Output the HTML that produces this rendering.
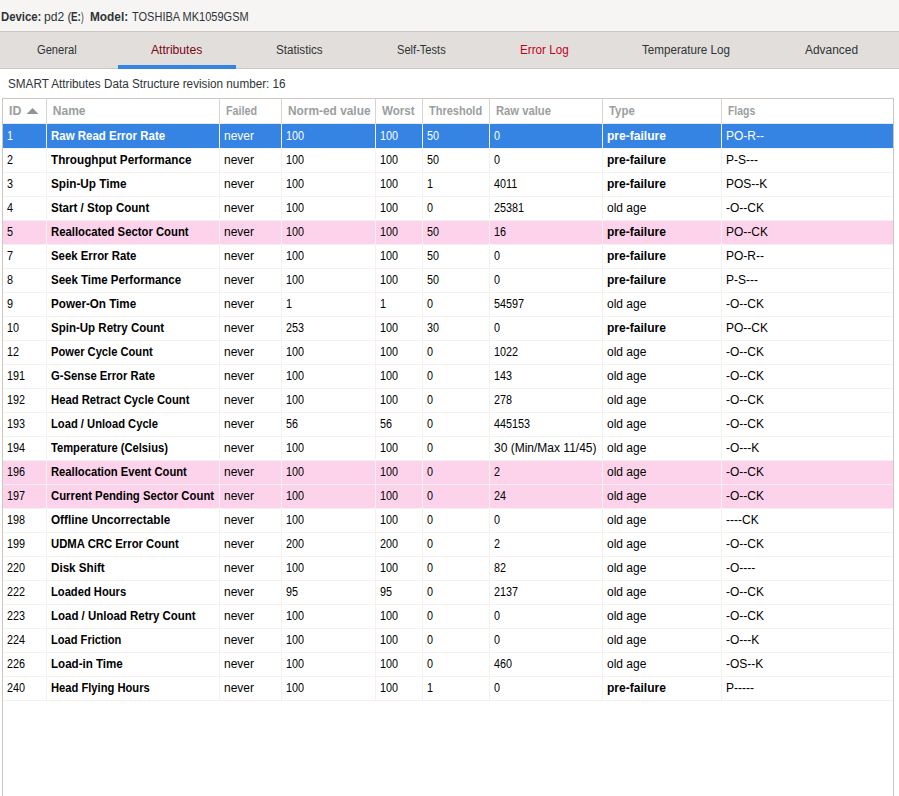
<!DOCTYPE html><html><head><meta charset="utf-8"><style>
*{margin:0;padding:0;box-sizing:border-box}
html,body{width:899px;height:796px;overflow:hidden;background:#fff;font-family:"Liberation Sans",sans-serif;font-size:12px;color:#000}
.a{position:absolute;white-space:nowrap}
#top{position:absolute;left:0;top:0;width:899px;height:31px;background:#f6f5f4}
#tabs{position:absolute;left:0;top:31px;width:899px;height:38px;background:#e1dedb;border-top:1px solid #cdc7c2;border-bottom:1px solid #cdc7c2}
#ul{position:absolute;left:118px;top:65px;width:118px;height:4px;background:#3584e4}
#frame{position:absolute;left:2px;top:98px;width:892px;height:720px;border:1px solid #cdc7c2;background:#fff}
.vs{position:absolute;width:1px}
.hl{position:absolute;left:3px;width:890px;height:1px;background:#f3f2f1}
.row{position:absolute;left:3px;width:890px;height:23px}
</style></head><body>
<div id="top"></div>
<div class="a" style="left:0.86px;top:10.0px;line-height:14px;font-weight:bold;color:#2e3436;transform:scaleX(0.9439);transform-origin:0 0;">Device:</div>
<div class="a" style="left:43.99px;top:10.0px;line-height:14px;color:#2e3436;transform:scaleX(1.0077);transform-origin:0 0;">pd2 (</div>
<div class="a" style="left:70.98px;top:10.0px;line-height:14px;font-weight:bold;color:#2e3436;transform:scaleX(0.82);transform-origin:0 0;">E:</div>
<div class="a" style="left:80.5px;top:10.0px;line-height:14px;color:#2e3436;transform:scaleX(0.675);transform-origin:0 0;">)</div>
<div class="a" style="left:89.51px;top:10.0px;line-height:14px;font-weight:bold;color:#2e3436;transform:scaleX(0.9865);transform-origin:0 0;">Model:</div>
<div class="a" style="left:131.5px;top:10.0px;line-height:14px;color:#2e3436;transform:scaleX(0.9173);transform-origin:0 0;">TOSHIBA MK1059GSM</div>
<div id="tabs"></div>
<div class="a" style="left:37.3px;top:43px;line-height:14px;color:#2e3436;transform:scaleX(0.9286);transform-origin:0 0;">General</div>
<div class="a" style="left:151.0px;top:43px;line-height:14px;color:#7d0414;transform:scaleX(1.0118);transform-origin:0 0;">Attributes</div>
<div class="a" style="left:276.33px;top:43px;line-height:14px;color:#2e3436;transform:scaleX(0.9723);transform-origin:0 0;">Statistics</div>
<div class="a" style="left:396.88px;top:43px;line-height:14px;color:#2e3436;transform:scaleX(0.925);transform-origin:0 0;">Self-Tests</div>
<div class="a" style="left:519.73px;top:43px;line-height:14px;color:#c4001c;transform:scaleX(0.9729);transform-origin:0 0;">Error Log</div>
<div class="a" style="left:642.2px;top:43px;line-height:14px;color:#2e3436;transform:scaleX(0.97);transform-origin:0 0;">Temperature Log</div>
<div class="a" style="left:805.0px;top:43px;line-height:14px;color:#2e3436;transform:scaleX(0.9943);transform-origin:0 0;">Advanced</div>
<div id="ul"></div>
<div class="a" style="left:8.02px;top:77px;line-height:14px;color:#2e3436;transform:scaleX(0.9763);transform-origin:0 0;">SMART Attributes Data Structure revision number: 16</div>
<div id="frame"></div>
<div class="hl" style="top:123px;background:#ece9e6"></div>
<div class="vs" style="left:46px;top:99px;height:25px;background:#d9d5d1"></div>
<div class="vs" style="left:219px;top:99px;height:25px;background:#d9d5d1"></div>
<div class="vs" style="left:281px;top:99px;height:25px;background:#d9d5d1"></div>
<div class="vs" style="left:375px;top:99px;height:25px;background:#d9d5d1"></div>
<div class="vs" style="left:422px;top:99px;height:25px;background:#d9d5d1"></div>
<div class="vs" style="left:489px;top:99px;height:25px;background:#d9d5d1"></div>
<div class="vs" style="left:602px;top:99px;height:25px;background:#d9d5d1"></div>
<div class="vs" style="left:721px;top:99px;height:25px;background:#d9d5d1"></div>
<div class="a" style="left:8.77px;top:99px;line-height:24px;font-weight:bold;color:#9b9e9e;transform:scaleX(1.0273);transform-origin:0 0;">ID</div>
<div class="a" style="left:52.8px;top:99px;line-height:24px;font-weight:bold;color:#9b9e9e;">Name</div>
<div class="a" style="left:226.0px;top:99px;line-height:24px;font-weight:bold;color:#9b9e9e;transform:scaleX(0.897);transform-origin:0 0;">Failed</div>
<div class="a" style="left:287.51px;top:99px;line-height:24px;font-weight:bold;color:#9b9e9e;transform:scaleX(0.9902);transform-origin:0 0;">Norm-ed value</div>
<div class="a" style="left:382.2px;top:99px;line-height:24px;font-weight:bold;color:#9b9e9e;transform:scaleX(0.9676);transform-origin:0 0;">Worst</div>
<div class="a" style="left:429.4px;top:99px;line-height:24px;font-weight:bold;color:#9b9e9e;transform:scaleX(0.9155);transform-origin:0 0;">Threshold</div>
<div class="a" style="left:496.16px;top:99px;line-height:24px;font-weight:bold;color:#9b9e9e;transform:scaleX(0.9362);transform-origin:0 0;">Raw value</div>
<div class="a" style="left:609.1px;top:99px;line-height:24px;font-weight:bold;color:#9b9e9e;transform:scaleX(0.9481);transform-origin:0 0;">Type</div>
<div class="a" style="left:728.03px;top:99px;line-height:24px;font-weight:bold;color:#9b9e9e;transform:scaleX(0.8667);transform-origin:0 0;">Flags</div>
<svg class="a" style="left:25.5px;top:108px" width="13" height="6"><path d="M0.6 6 L6.5 0.1 L12.4 6 Z" fill="#8e9394"/></svg>
<div class="row" style="top:124px;height:24px;background:#3584e4"></div>
<div class="a" style="left:7px;top:124px;line-height:24px;color:#fff;transform:scaleX(0.9);transform-origin:0 0;">1</div>
<div class="a" style="left:51.24px;top:124px;line-height:24px;font-weight:bold;color:#fff;transform:scaleX(0.9559);transform-origin:0 0;">Raw Read Error Rate</div>
<div class="a" style="left:224px;top:124px;line-height:24px;color:#fff;">never</div>
<div class="a" style="left:286px;top:124px;line-height:24px;color:#fff;transform:scaleX(0.9);transform-origin:0 0;">100</div>
<div class="a" style="left:380px;top:124px;line-height:24px;color:#fff;transform:scaleX(0.9);transform-origin:0 0;">100</div>
<div class="a" style="left:427px;top:124px;line-height:24px;color:#fff;transform:scaleX(0.9);transform-origin:0 0;">50</div>
<div class="a" style="left:494px;top:124px;line-height:24px;color:#fff;transform:scaleX(0.9);transform-origin:0 0;">0</div>
<div class="a" style="left:606.6px;top:124px;line-height:24px;font-weight:bold;color:#fff;transform:scaleX(1.0034);transform-origin:0 0;">pre-failure</div>
<div class="a" style="left:726px;top:124px;line-height:24px;color:#fff;">PO-R--</div>
<div class="hl" style="top:148px"></div>
<div class="a" style="left:7px;top:148px;line-height:24px;color:#000;transform:scaleX(0.9);transform-origin:0 0;">2</div>
<div class="a" style="left:51.4px;top:148px;line-height:24px;font-weight:bold;color:#000;transform:scaleX(0.975);transform-origin:0 0;">Throughput Performance</div>
<div class="a" style="left:224px;top:148px;line-height:24px;color:#000;">never</div>
<div class="a" style="left:286px;top:148px;line-height:24px;color:#000;transform:scaleX(0.9);transform-origin:0 0;">100</div>
<div class="a" style="left:380px;top:148px;line-height:24px;color:#000;transform:scaleX(0.9);transform-origin:0 0;">100</div>
<div class="a" style="left:427px;top:148px;line-height:24px;color:#000;transform:scaleX(0.9);transform-origin:0 0;">50</div>
<div class="a" style="left:494px;top:148px;line-height:24px;color:#000;transform:scaleX(0.9);transform-origin:0 0;">0</div>
<div class="a" style="left:606.6px;top:148px;line-height:24px;font-weight:bold;color:#000;transform:scaleX(1.0034);transform-origin:0 0;">pre-failure</div>
<div class="a" style="left:726px;top:148px;line-height:24px;color:#000;">P-S---</div>
<div class="hl" style="top:172px"></div>
<div class="a" style="left:7px;top:172px;line-height:24px;color:#000;transform:scaleX(0.9);transform-origin:0 0;">3</div>
<div class="a" style="left:51.4px;top:172px;line-height:24px;font-weight:bold;color:#000;transform:scaleX(0.9779);transform-origin:0 0;">Spin-Up Time</div>
<div class="a" style="left:224px;top:172px;line-height:24px;color:#000;">never</div>
<div class="a" style="left:286px;top:172px;line-height:24px;color:#000;transform:scaleX(0.9);transform-origin:0 0;">100</div>
<div class="a" style="left:380px;top:172px;line-height:24px;color:#000;transform:scaleX(0.9);transform-origin:0 0;">100</div>
<div class="a" style="left:427px;top:172px;line-height:24px;color:#000;transform:scaleX(0.9);transform-origin:0 0;">1</div>
<div class="a" style="left:494px;top:172px;line-height:24px;color:#000;transform:scaleX(0.9);transform-origin:0 0;">4011</div>
<div class="a" style="left:606.6px;top:172px;line-height:24px;font-weight:bold;color:#000;transform:scaleX(1.0034);transform-origin:0 0;">pre-failure</div>
<div class="a" style="left:726px;top:172px;line-height:24px;color:#000;">POS--K</div>
<div class="hl" style="top:196px"></div>
<div class="a" style="left:7px;top:196px;line-height:24px;color:#000;transform:scaleX(0.9);transform-origin:0 0;">4</div>
<div class="a" style="left:51.4px;top:196px;line-height:24px;font-weight:bold;color:#000;transform:scaleX(0.9637);transform-origin:0 0;">Start / Stop Count</div>
<div class="a" style="left:224px;top:196px;line-height:24px;color:#000;">never</div>
<div class="a" style="left:286px;top:196px;line-height:24px;color:#000;transform:scaleX(0.9);transform-origin:0 0;">100</div>
<div class="a" style="left:380px;top:196px;line-height:24px;color:#000;transform:scaleX(0.9);transform-origin:0 0;">100</div>
<div class="a" style="left:427px;top:196px;line-height:24px;color:#000;transform:scaleX(0.9);transform-origin:0 0;">0</div>
<div class="a" style="left:494px;top:196px;line-height:24px;color:#000;transform:scaleX(0.9);transform-origin:0 0;">25381</div>
<div class="a" style="left:607px;top:196px;line-height:24px;color:#000;">old age</div>
<div class="a" style="left:726px;top:196px;line-height:24px;color:#000;">-O--CK</div>
<div class="hl" style="top:220px"></div>
<div class="row" style="top:221px;background:#fdd3eb"></div>
<div class="a" style="left:7px;top:220px;line-height:24px;color:#000;transform:scaleX(0.9);transform-origin:0 0;">5</div>
<div class="a" style="left:51.26px;top:220px;line-height:24px;font-weight:bold;color:#000;transform:scaleX(0.9421);transform-origin:0 0;">Reallocated Sector Count</div>
<div class="a" style="left:224px;top:220px;line-height:24px;color:#000;">never</div>
<div class="a" style="left:286px;top:220px;line-height:24px;color:#000;transform:scaleX(0.9);transform-origin:0 0;">100</div>
<div class="a" style="left:380px;top:220px;line-height:24px;color:#000;transform:scaleX(0.9);transform-origin:0 0;">100</div>
<div class="a" style="left:427px;top:220px;line-height:24px;color:#000;transform:scaleX(0.9);transform-origin:0 0;">50</div>
<div class="a" style="left:494px;top:220px;line-height:24px;color:#000;transform:scaleX(0.9);transform-origin:0 0;">16</div>
<div class="a" style="left:606.6px;top:220px;line-height:24px;font-weight:bold;color:#000;transform:scaleX(1.0034);transform-origin:0 0;">pre-failure</div>
<div class="a" style="left:726px;top:220px;line-height:24px;color:#000;">PO--CK</div>
<div class="hl" style="top:244px"></div>
<div class="a" style="left:7px;top:244px;line-height:24px;color:#000;transform:scaleX(0.9);transform-origin:0 0;">7</div>
<div class="a" style="left:51.4px;top:244px;line-height:24px;font-weight:bold;color:#000;transform:scaleX(0.9478);transform-origin:0 0;">Seek Error Rate</div>
<div class="a" style="left:224px;top:244px;line-height:24px;color:#000;">never</div>
<div class="a" style="left:286px;top:244px;line-height:24px;color:#000;transform:scaleX(0.9);transform-origin:0 0;">100</div>
<div class="a" style="left:380px;top:244px;line-height:24px;color:#000;transform:scaleX(0.9);transform-origin:0 0;">100</div>
<div class="a" style="left:427px;top:244px;line-height:24px;color:#000;transform:scaleX(0.9);transform-origin:0 0;">50</div>
<div class="a" style="left:494px;top:244px;line-height:24px;color:#000;transform:scaleX(0.9);transform-origin:0 0;">0</div>
<div class="a" style="left:606.6px;top:244px;line-height:24px;font-weight:bold;color:#000;transform:scaleX(1.0034);transform-origin:0 0;">pre-failure</div>
<div class="a" style="left:726px;top:244px;line-height:24px;color:#000;">PO-R--</div>
<div class="hl" style="top:268px"></div>
<div class="a" style="left:7px;top:268px;line-height:24px;color:#000;transform:scaleX(0.9);transform-origin:0 0;">8</div>
<div class="a" style="left:51.4px;top:268px;line-height:24px;font-weight:bold;color:#000;transform:scaleX(0.9574);transform-origin:0 0;">Seek Time Performance</div>
<div class="a" style="left:224px;top:268px;line-height:24px;color:#000;">never</div>
<div class="a" style="left:286px;top:268px;line-height:24px;color:#000;transform:scaleX(0.9);transform-origin:0 0;">100</div>
<div class="a" style="left:380px;top:268px;line-height:24px;color:#000;transform:scaleX(0.9);transform-origin:0 0;">100</div>
<div class="a" style="left:427px;top:268px;line-height:24px;color:#000;transform:scaleX(0.9);transform-origin:0 0;">50</div>
<div class="a" style="left:494px;top:268px;line-height:24px;color:#000;transform:scaleX(0.9);transform-origin:0 0;">0</div>
<div class="a" style="left:606.6px;top:268px;line-height:24px;font-weight:bold;color:#000;transform:scaleX(1.0034);transform-origin:0 0;">pre-failure</div>
<div class="a" style="left:726px;top:268px;line-height:24px;color:#000;">P-S---</div>
<div class="hl" style="top:292px"></div>
<div class="a" style="left:7px;top:292px;line-height:24px;color:#000;transform:scaleX(0.9);transform-origin:0 0;">9</div>
<div class="a" style="left:51.23px;top:292px;line-height:24px;font-weight:bold;color:#000;transform:scaleX(0.9701);transform-origin:0 0;">Power-On Time</div>
<div class="a" style="left:224px;top:292px;line-height:24px;color:#000;">never</div>
<div class="a" style="left:286px;top:292px;line-height:24px;color:#000;transform:scaleX(0.9);transform-origin:0 0;">1</div>
<div class="a" style="left:380px;top:292px;line-height:24px;color:#000;transform:scaleX(0.9);transform-origin:0 0;">1</div>
<div class="a" style="left:427px;top:292px;line-height:24px;color:#000;transform:scaleX(0.9);transform-origin:0 0;">0</div>
<div class="a" style="left:494px;top:292px;line-height:24px;color:#000;transform:scaleX(0.9);transform-origin:0 0;">54597</div>
<div class="a" style="left:607px;top:292px;line-height:24px;color:#000;">old age</div>
<div class="a" style="left:726px;top:292px;line-height:24px;color:#000;">-O--CK</div>
<div class="hl" style="top:316px"></div>
<div class="a" style="left:7px;top:316px;line-height:24px;color:#000;transform:scaleX(0.9);transform-origin:0 0;">10</div>
<div class="a" style="left:51.4px;top:316px;line-height:24px;font-weight:bold;color:#000;transform:scaleX(0.9593);transform-origin:0 0;">Spin-Up Retry Count</div>
<div class="a" style="left:224px;top:316px;line-height:24px;color:#000;">never</div>
<div class="a" style="left:286px;top:316px;line-height:24px;color:#000;transform:scaleX(0.9);transform-origin:0 0;">253</div>
<div class="a" style="left:380px;top:316px;line-height:24px;color:#000;transform:scaleX(0.9);transform-origin:0 0;">100</div>
<div class="a" style="left:427px;top:316px;line-height:24px;color:#000;transform:scaleX(0.9);transform-origin:0 0;">30</div>
<div class="a" style="left:494px;top:316px;line-height:24px;color:#000;transform:scaleX(0.9);transform-origin:0 0;">0</div>
<div class="a" style="left:606.6px;top:316px;line-height:24px;font-weight:bold;color:#000;transform:scaleX(1.0034);transform-origin:0 0;">pre-failure</div>
<div class="a" style="left:726px;top:316px;line-height:24px;color:#000;">PO--CK</div>
<div class="hl" style="top:340px"></div>
<div class="a" style="left:7px;top:340px;line-height:24px;color:#000;transform:scaleX(0.9);transform-origin:0 0;">12</div>
<div class="a" style="left:51.27px;top:340px;line-height:24px;font-weight:bold;color:#000;transform:scaleX(0.9296);transform-origin:0 0;">Power Cycle Count</div>
<div class="a" style="left:224px;top:340px;line-height:24px;color:#000;">never</div>
<div class="a" style="left:286px;top:340px;line-height:24px;color:#000;transform:scaleX(0.9);transform-origin:0 0;">100</div>
<div class="a" style="left:380px;top:340px;line-height:24px;color:#000;transform:scaleX(0.9);transform-origin:0 0;">100</div>
<div class="a" style="left:427px;top:340px;line-height:24px;color:#000;transform:scaleX(0.9);transform-origin:0 0;">0</div>
<div class="a" style="left:494px;top:340px;line-height:24px;color:#000;transform:scaleX(0.9);transform-origin:0 0;">1022</div>
<div class="a" style="left:607px;top:340px;line-height:24px;color:#000;">old age</div>
<div class="a" style="left:726px;top:340px;line-height:24px;color:#000;">-O--CK</div>
<div class="hl" style="top:364px"></div>
<div class="a" style="left:7px;top:364px;line-height:24px;color:#000;transform:scaleX(0.9);transform-origin:0 0;">191</div>
<div class="a" style="left:51.4px;top:364px;line-height:24px;font-weight:bold;color:#000;transform:scaleX(0.9387);transform-origin:0 0;">G-Sense Error Rate</div>
<div class="a" style="left:224px;top:364px;line-height:24px;color:#000;">never</div>
<div class="a" style="left:286px;top:364px;line-height:24px;color:#000;transform:scaleX(0.9);transform-origin:0 0;">100</div>
<div class="a" style="left:380px;top:364px;line-height:24px;color:#000;transform:scaleX(0.9);transform-origin:0 0;">100</div>
<div class="a" style="left:427px;top:364px;line-height:24px;color:#000;transform:scaleX(0.9);transform-origin:0 0;">0</div>
<div class="a" style="left:494px;top:364px;line-height:24px;color:#000;transform:scaleX(0.9);transform-origin:0 0;">143</div>
<div class="a" style="left:607px;top:364px;line-height:24px;color:#000;">old age</div>
<div class="a" style="left:726px;top:364px;line-height:24px;color:#000;">-O--CK</div>
<div class="hl" style="top:388px"></div>
<div class="a" style="left:7px;top:388px;line-height:24px;color:#000;transform:scaleX(0.9);transform-origin:0 0;">192</div>
<div class="a" style="left:51.26px;top:388px;line-height:24px;font-weight:bold;color:#000;transform:scaleX(0.9397);transform-origin:0 0;">Head Retract Cycle Count</div>
<div class="a" style="left:224px;top:388px;line-height:24px;color:#000;">never</div>
<div class="a" style="left:286px;top:388px;line-height:24px;color:#000;transform:scaleX(0.9);transform-origin:0 0;">100</div>
<div class="a" style="left:380px;top:388px;line-height:24px;color:#000;transform:scaleX(0.9);transform-origin:0 0;">100</div>
<div class="a" style="left:427px;top:388px;line-height:24px;color:#000;transform:scaleX(0.9);transform-origin:0 0;">0</div>
<div class="a" style="left:494px;top:388px;line-height:24px;color:#000;transform:scaleX(0.9);transform-origin:0 0;">278</div>
<div class="a" style="left:607px;top:388px;line-height:24px;color:#000;">old age</div>
<div class="a" style="left:726px;top:388px;line-height:24px;color:#000;">-O--CK</div>
<div class="hl" style="top:412px"></div>
<div class="a" style="left:7px;top:412px;line-height:24px;color:#000;transform:scaleX(0.9);transform-origin:0 0;">193</div>
<div class="a" style="left:51.27px;top:412px;line-height:24px;font-weight:bold;color:#000;transform:scaleX(0.9325);transform-origin:0 0;">Load / Unload Cycle</div>
<div class="a" style="left:224px;top:412px;line-height:24px;color:#000;">never</div>
<div class="a" style="left:286px;top:412px;line-height:24px;color:#000;transform:scaleX(0.9);transform-origin:0 0;">56</div>
<div class="a" style="left:380px;top:412px;line-height:24px;color:#000;transform:scaleX(0.9);transform-origin:0 0;">56</div>
<div class="a" style="left:427px;top:412px;line-height:24px;color:#000;transform:scaleX(0.9);transform-origin:0 0;">0</div>
<div class="a" style="left:494px;top:412px;line-height:24px;color:#000;transform:scaleX(0.9);transform-origin:0 0;">445153</div>
<div class="a" style="left:607px;top:412px;line-height:24px;color:#000;">old age</div>
<div class="a" style="left:726px;top:412px;line-height:24px;color:#000;">-O--CK</div>
<div class="hl" style="top:436px"></div>
<div class="a" style="left:7px;top:436px;line-height:24px;color:#000;transform:scaleX(0.9);transform-origin:0 0;">194</div>
<div class="a" style="left:51.4px;top:436px;line-height:24px;font-weight:bold;color:#000;transform:scaleX(0.9288);transform-origin:0 0;">Temperature (Celsius)</div>
<div class="a" style="left:224px;top:436px;line-height:24px;color:#000;">never</div>
<div class="a" style="left:286px;top:436px;line-height:24px;color:#000;transform:scaleX(0.9);transform-origin:0 0;">100</div>
<div class="a" style="left:380px;top:436px;line-height:24px;color:#000;transform:scaleX(0.9);transform-origin:0 0;">100</div>
<div class="a" style="left:427px;top:436px;line-height:24px;color:#000;transform:scaleX(0.9);transform-origin:0 0;">0</div>
<div class="a" style="left:494px;top:436px;line-height:24px;color:#000;">30 (Min/Max 11/45)</div>
<div class="a" style="left:607px;top:436px;line-height:24px;color:#000;">old age</div>
<div class="a" style="left:726px;top:436px;line-height:24px;color:#000;">-O---K</div>
<div class="hl" style="top:460px"></div>
<div class="row" style="top:461px;background:#fdd3eb"></div>
<div class="a" style="left:7px;top:460px;line-height:24px;color:#000;transform:scaleX(0.9);transform-origin:0 0;">196</div>
<div class="a" style="left:51.27px;top:460px;line-height:24px;font-weight:bold;color:#000;transform:scaleX(0.9347);transform-origin:0 0;">Reallocation Event Count</div>
<div class="a" style="left:224px;top:460px;line-height:24px;color:#000;">never</div>
<div class="a" style="left:286px;top:460px;line-height:24px;color:#000;transform:scaleX(0.9);transform-origin:0 0;">100</div>
<div class="a" style="left:380px;top:460px;line-height:24px;color:#000;transform:scaleX(0.9);transform-origin:0 0;">100</div>
<div class="a" style="left:427px;top:460px;line-height:24px;color:#000;transform:scaleX(0.9);transform-origin:0 0;">0</div>
<div class="a" style="left:494px;top:460px;line-height:24px;color:#000;transform:scaleX(0.9);transform-origin:0 0;">2</div>
<div class="a" style="left:607px;top:460px;line-height:24px;color:#000;">old age</div>
<div class="a" style="left:726px;top:460px;line-height:24px;color:#000;">-O--CK</div>
<div class="hl" style="top:484px"></div>
<div class="row" style="top:485px;background:#fdd3eb"></div>
<div class="a" style="left:7px;top:484px;line-height:24px;color:#000;transform:scaleX(0.9);transform-origin:0 0;">197</div>
<div class="a" style="left:51.4px;top:484px;line-height:24px;font-weight:bold;color:#000;transform:scaleX(0.9445);transform-origin:0 0;">Current Pending Sector Count</div>
<div class="a" style="left:224px;top:484px;line-height:24px;color:#000;">never</div>
<div class="a" style="left:286px;top:484px;line-height:24px;color:#000;transform:scaleX(0.9);transform-origin:0 0;">100</div>
<div class="a" style="left:380px;top:484px;line-height:24px;color:#000;transform:scaleX(0.9);transform-origin:0 0;">100</div>
<div class="a" style="left:427px;top:484px;line-height:24px;color:#000;transform:scaleX(0.9);transform-origin:0 0;">0</div>
<div class="a" style="left:494px;top:484px;line-height:24px;color:#000;transform:scaleX(0.9);transform-origin:0 0;">24</div>
<div class="a" style="left:607px;top:484px;line-height:24px;color:#000;">old age</div>
<div class="a" style="left:726px;top:484px;line-height:24px;color:#000;">-O--CK</div>
<div class="hl" style="top:508px"></div>
<div class="a" style="left:7px;top:508px;line-height:24px;color:#000;transform:scaleX(0.9);transform-origin:0 0;">198</div>
<div class="a" style="left:51.4px;top:508px;line-height:24px;font-weight:bold;color:#000;transform:scaleX(0.977);transform-origin:0 0;">Offline Uncorrectable</div>
<div class="a" style="left:224px;top:508px;line-height:24px;color:#000;">never</div>
<div class="a" style="left:286px;top:508px;line-height:24px;color:#000;transform:scaleX(0.9);transform-origin:0 0;">100</div>
<div class="a" style="left:380px;top:508px;line-height:24px;color:#000;transform:scaleX(0.9);transform-origin:0 0;">100</div>
<div class="a" style="left:427px;top:508px;line-height:24px;color:#000;transform:scaleX(0.9);transform-origin:0 0;">0</div>
<div class="a" style="left:494px;top:508px;line-height:24px;color:#000;transform:scaleX(0.9);transform-origin:0 0;">0</div>
<div class="a" style="left:607px;top:508px;line-height:24px;color:#000;">old age</div>
<div class="a" style="left:726px;top:508px;line-height:24px;color:#000;">----CK</div>
<div class="hl" style="top:532px"></div>
<div class="a" style="left:7px;top:532px;line-height:24px;color:#000;transform:scaleX(0.9);transform-origin:0 0;">199</div>
<div class="a" style="left:51.4px;top:532px;line-height:24px;font-weight:bold;color:#000;transform:scaleX(0.9426);transform-origin:0 0;">UDMA CRC Error Count</div>
<div class="a" style="left:224px;top:532px;line-height:24px;color:#000;">never</div>
<div class="a" style="left:286px;top:532px;line-height:24px;color:#000;transform:scaleX(0.9);transform-origin:0 0;">200</div>
<div class="a" style="left:380px;top:532px;line-height:24px;color:#000;transform:scaleX(0.9);transform-origin:0 0;">200</div>
<div class="a" style="left:427px;top:532px;line-height:24px;color:#000;transform:scaleX(0.9);transform-origin:0 0;">0</div>
<div class="a" style="left:494px;top:532px;line-height:24px;color:#000;transform:scaleX(0.9);transform-origin:0 0;">2</div>
<div class="a" style="left:607px;top:532px;line-height:24px;color:#000;">old age</div>
<div class="a" style="left:726px;top:532px;line-height:24px;color:#000;">-O--CK</div>
<div class="hl" style="top:556px"></div>
<div class="a" style="left:7px;top:556px;line-height:24px;color:#000;transform:scaleX(0.9);transform-origin:0 0;">220</div>
<div class="a" style="left:51.23px;top:556px;line-height:24px;font-weight:bold;color:#000;transform:scaleX(0.9704);transform-origin:0 0;">Disk Shift</div>
<div class="a" style="left:224px;top:556px;line-height:24px;color:#000;">never</div>
<div class="a" style="left:286px;top:556px;line-height:24px;color:#000;transform:scaleX(0.9);transform-origin:0 0;">100</div>
<div class="a" style="left:380px;top:556px;line-height:24px;color:#000;transform:scaleX(0.9);transform-origin:0 0;">100</div>
<div class="a" style="left:427px;top:556px;line-height:24px;color:#000;transform:scaleX(0.9);transform-origin:0 0;">0</div>
<div class="a" style="left:494px;top:556px;line-height:24px;color:#000;transform:scaleX(0.9);transform-origin:0 0;">82</div>
<div class="a" style="left:607px;top:556px;line-height:24px;color:#000;">old age</div>
<div class="a" style="left:726px;top:556px;line-height:24px;color:#000;">-O----</div>
<div class="hl" style="top:580px"></div>
<div class="a" style="left:7px;top:580px;line-height:24px;color:#000;transform:scaleX(0.9);transform-origin:0 0;">222</div>
<div class="a" style="left:51.27px;top:580px;line-height:24px;font-weight:bold;color:#000;transform:scaleX(0.9316);transform-origin:0 0;">Loaded Hours</div>
<div class="a" style="left:224px;top:580px;line-height:24px;color:#000;">never</div>
<div class="a" style="left:286px;top:580px;line-height:24px;color:#000;transform:scaleX(0.9);transform-origin:0 0;">95</div>
<div class="a" style="left:380px;top:580px;line-height:24px;color:#000;transform:scaleX(0.9);transform-origin:0 0;">95</div>
<div class="a" style="left:427px;top:580px;line-height:24px;color:#000;transform:scaleX(0.9);transform-origin:0 0;">0</div>
<div class="a" style="left:494px;top:580px;line-height:24px;color:#000;transform:scaleX(0.9);transform-origin:0 0;">2137</div>
<div class="a" style="left:607px;top:580px;line-height:24px;color:#000;">old age</div>
<div class="a" style="left:726px;top:580px;line-height:24px;color:#000;">-O--CK</div>
<div class="hl" style="top:604px"></div>
<div class="a" style="left:7px;top:604px;line-height:24px;color:#000;transform:scaleX(0.9);transform-origin:0 0;">223</div>
<div class="a" style="left:51.24px;top:604px;line-height:24px;font-weight:bold;color:#000;transform:scaleX(0.956);transform-origin:0 0;">Load / Unload Retry Count</div>
<div class="a" style="left:224px;top:604px;line-height:24px;color:#000;">never</div>
<div class="a" style="left:286px;top:604px;line-height:24px;color:#000;transform:scaleX(0.9);transform-origin:0 0;">100</div>
<div class="a" style="left:380px;top:604px;line-height:24px;color:#000;transform:scaleX(0.9);transform-origin:0 0;">100</div>
<div class="a" style="left:427px;top:604px;line-height:24px;color:#000;transform:scaleX(0.9);transform-origin:0 0;">0</div>
<div class="a" style="left:494px;top:604px;line-height:24px;color:#000;transform:scaleX(0.9);transform-origin:0 0;">0</div>
<div class="a" style="left:607px;top:604px;line-height:24px;color:#000;">old age</div>
<div class="a" style="left:726px;top:604px;line-height:24px;color:#000;">-O--CK</div>
<div class="hl" style="top:628px"></div>
<div class="a" style="left:7px;top:628px;line-height:24px;color:#000;transform:scaleX(0.9);transform-origin:0 0;">224</div>
<div class="a" style="left:51.27px;top:628px;line-height:24px;font-weight:bold;color:#000;transform:scaleX(0.9253);transform-origin:0 0;">Load Friction</div>
<div class="a" style="left:224px;top:628px;line-height:24px;color:#000;">never</div>
<div class="a" style="left:286px;top:628px;line-height:24px;color:#000;transform:scaleX(0.9);transform-origin:0 0;">100</div>
<div class="a" style="left:380px;top:628px;line-height:24px;color:#000;transform:scaleX(0.9);transform-origin:0 0;">100</div>
<div class="a" style="left:427px;top:628px;line-height:24px;color:#000;transform:scaleX(0.9);transform-origin:0 0;">0</div>
<div class="a" style="left:494px;top:628px;line-height:24px;color:#000;transform:scaleX(0.9);transform-origin:0 0;">0</div>
<div class="a" style="left:607px;top:628px;line-height:24px;color:#000;">old age</div>
<div class="a" style="left:726px;top:628px;line-height:24px;color:#000;">-O---K</div>
<div class="hl" style="top:652px"></div>
<div class="a" style="left:7px;top:652px;line-height:24px;color:#000;transform:scaleX(0.9);transform-origin:0 0;">226</div>
<div class="a" style="left:51.24px;top:652px;line-height:24px;font-weight:bold;color:#000;transform:scaleX(0.9644);transform-origin:0 0;">Load-in Time</div>
<div class="a" style="left:224px;top:652px;line-height:24px;color:#000;">never</div>
<div class="a" style="left:286px;top:652px;line-height:24px;color:#000;transform:scaleX(0.9);transform-origin:0 0;">100</div>
<div class="a" style="left:380px;top:652px;line-height:24px;color:#000;transform:scaleX(0.9);transform-origin:0 0;">100</div>
<div class="a" style="left:427px;top:652px;line-height:24px;color:#000;transform:scaleX(0.9);transform-origin:0 0;">0</div>
<div class="a" style="left:494px;top:652px;line-height:24px;color:#000;transform:scaleX(0.9);transform-origin:0 0;">460</div>
<div class="a" style="left:607px;top:652px;line-height:24px;color:#000;">old age</div>
<div class="a" style="left:726px;top:652px;line-height:24px;color:#000;">-OS--K</div>
<div class="hl" style="top:676px"></div>
<div class="a" style="left:7px;top:676px;line-height:24px;color:#000;transform:scaleX(0.9);transform-origin:0 0;">240</div>
<div class="a" style="left:51.27px;top:676px;line-height:24px;font-weight:bold;color:#000;transform:scaleX(0.9314);transform-origin:0 0;">Head Flying Hours</div>
<div class="a" style="left:224px;top:676px;line-height:24px;color:#000;">never</div>
<div class="a" style="left:286px;top:676px;line-height:24px;color:#000;transform:scaleX(0.9);transform-origin:0 0;">100</div>
<div class="a" style="left:380px;top:676px;line-height:24px;color:#000;transform:scaleX(0.9);transform-origin:0 0;">100</div>
<div class="a" style="left:427px;top:676px;line-height:24px;color:#000;transform:scaleX(0.9);transform-origin:0 0;">1</div>
<div class="a" style="left:494px;top:676px;line-height:24px;color:#000;transform:scaleX(0.9);transform-origin:0 0;">0</div>
<div class="a" style="left:606.6px;top:676px;line-height:24px;font-weight:bold;color:#000;transform:scaleX(1.0034);transform-origin:0 0;">pre-failure</div>
<div class="a" style="left:726px;top:676px;line-height:24px;color:#000;">P-----</div>
<div class="vs" style="left:46px;top:124px;height:577px;background:#f3f2f1"></div>
<div class="vs" style="left:219px;top:124px;height:577px;background:#f3f2f1"></div>
<div class="vs" style="left:281px;top:124px;height:577px;background:#f3f2f1"></div>
<div class="vs" style="left:375px;top:124px;height:577px;background:#f3f2f1"></div>
<div class="vs" style="left:422px;top:124px;height:577px;background:#f3f2f1"></div>
<div class="vs" style="left:489px;top:124px;height:577px;background:#f3f2f1"></div>
<div class="vs" style="left:602px;top:124px;height:577px;background:#f3f2f1"></div>
<div class="vs" style="left:721px;top:124px;height:577px;background:#f3f2f1"></div>
<div class="vs" style="left:46px;top:124px;height:24px;background:#e6effb"></div>
<div class="hl" style="top:700px"></div>
</body></html>
